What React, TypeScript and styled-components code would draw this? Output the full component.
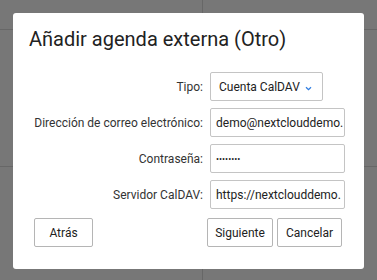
import React from "react";
import styled, { createGlobalStyle } from "styled-components";

const Global = createGlobalStyle`
    html, body {
        margin: 0;
        padding: 0;
        width: 377px;
        height: 280px;
        overflow: hidden;
        background: #777777;
        font-family: Roboto, "Liberation Sans", Arial, sans-serif;
    }
`;

const Backdrop = styled.div`
    position: relative;
    width: 377px;
    height: 280px;
    padding: 13px 13px 0 13px;
    box-sizing: border-box;
    background: #777777;
`;

const GridLineH = styled.div<{ top: number }>`
    position: absolute;
    left: 0;
    right: 0;
    top: ${(p) => p.top}px;
    height: 1px;
    background: #676767;
`;

const GridLineV = styled.div<{ left: number }>`
    position: absolute;
    top: 0;
    bottom: 0;
    left: ${(p) => p.left}px;
    width: 1px;
    background: #676767;
`;

const Dialog = styled.div`
    position: relative;
    width: 351px;
    height: 256px;
    box-sizing: border-box;
    background: #ffffff;
    border-radius: 3px;
    padding: 14px 0 0 0;
    display: flex;
    flex-direction: column;
`;

const Title = styled.h1`
    margin: 0 0 21px 16px;
    font-size: 20px;
    font-weight: 400;
    color: #222222;
    line-height: 24px;
    white-space: nowrap;
`;

const Form = styled.div`
    display: grid;
    grid-template-columns: 1fr 135px;
    column-gap: 7px;
    row-gap: 7px;
    padding-right: 19px;
    align-items: center;
`;

const Label = styled.label`
    justify-self: end;
    font-size: 12px;
    color: #333333;
    white-space: nowrap;
`;

const Field = styled.div<{ width?: number }>`
    width: ${(p) => (p.width ? `${p.width}px` : "100%")};
    height: 29px;
    box-sizing: border-box;
    border: 1px solid #c4c4c4;
    border-radius: 2px;
    padding: 0 0 0 5px;
    display: flex;
    align-items: center;
    gap: 5px;
    font-size: 12px;
    color: #222222;
    overflow: hidden;
    white-space: nowrap;
`;

const SelectField = styled(Field)`
    padding-left: 8px;
`;

const Dots = styled.span`
    font-size: 9px;
    letter-spacing: 0;
    color: #222222;
`;

const Buttons = styled.div`
    display: flex;
    align-items: center;
    margin-top: 9px;
    padding: 0 22px 0 21px;
    gap: 4px;
`;

const Spacer = styled.div`
    flex: 1;
`;

const Button = styled.button<{ width: number }>`
    width: ${(p) => p.width}px;
    height: 29px;
    box-sizing: border-box;
    background: #ffffff;
    border: 1px solid #b5b5b5;
    border-radius: 2px;
    font-family: inherit;
    font-size: 12px;
    color: #222222;
    padding: 0;
`;

const Chevron = () => (
    <svg width="7" height="5" viewBox="0 0 7 5" style={{ marginTop: 3 }}>
        <path d="M1 1.2 L3.5 3.7 L6 1.2" fill="none" stroke="#2f7de1" strokeWidth="1.3" />
    </svg>
);

export default function App() {
    return (
        <>
            <Global />
            <Backdrop>
                <GridLineH top={29} />
                <GridLineH top={166} />
                <GridLineV left={202} />
                <Dialog>
                    <Title>Añadir agenda externa (Otro)</Title>
                    <Form>
                        <Label>Tipo:</Label>
                        <SelectField width={113}>
                            Cuenta CalDAV <Chevron />
                        </SelectField>
                        <Label>Dirección de correo electrónico:</Label>
                        <Field>demo@nextclouddemo.</Field>
                        <Label>Contraseña:</Label>
                        <Field>
                            <Dots>••••••••</Dots>
                        </Field>
                        <Label>Servidor CalDAV:</Label>
                        <Field>https://nextclouddemo.</Field>
                    </Form>
                    <Buttons>
                        <Button width={59}>Atrás</Button>
                        <Spacer />
                        <Button width={66}>Siguiente</Button>
                        <Button width={65}>Cancelar</Button>
                    </Buttons>
                </Dialog>
            </Backdrop>
        </>
    );
}
